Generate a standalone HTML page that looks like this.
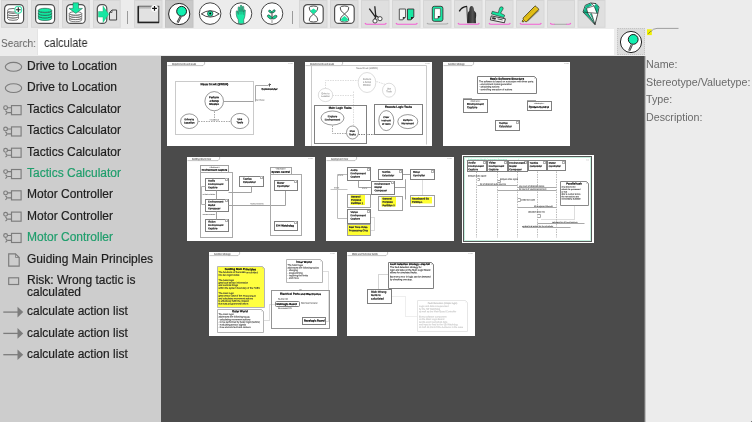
<!DOCTYPE html>
<html><head><meta charset="utf-8">
<style>
*{margin:0;padding:0;box-sizing:border-box}
html,body{width:752px;height:422px;overflow:hidden;background:#ececec;font-family:"Liberation Sans",sans-serif}
.row,.lbl,.th,.abs{will-change:transform}
.abs{position:absolute}
.btn{position:absolute;top:0;width:27px;height:28px;background:#dedede}
.btn svg{position:absolute;left:0;top:0}
.sep{position:absolute;top:11px;width:1px;height:13px;background:#a8a8a8}
#left{position:absolute;left:0;top:56px;width:161px;height:366px;background:#cdcdcd}
#dark{position:absolute;left:161px;top:56px;width:484px;height:366px;background:#4b4b4b}
#right{position:absolute;left:645px;top:28px;width:107px;height:394px;background:#ececec}
.row{position:absolute;left:27px;font-size:12px;color:#1e1e1e;white-space:nowrap;line-height:14px;-webkit-text-stroke:0.2px #1e1e1e}
.row.g{-webkit-text-stroke:0.2px #1f9e6c}
.row.g{color:#1f9e6c}
.ico{position:absolute;left:0}
.lbl{position:absolute;left:646px;font-size:10.7px;color:#6a6a6a;white-space:nowrap;line-height:12px}
.th{position:absolute;background:#fff}
.th svg text{text-rendering:geometricPrecision}
</style></head><body>
<!-- toolbar buttons -->
<svg class="abs" style="left:0;top:0" width="752" height="29" viewBox="0 0 752 29">
<defs>
<linearGradient id="gbar" x1="0" y1="0" x2="0" y2="1"><stop offset="0" stop-color="#aaa"/><stop offset="1" stop-color="#d0d0d0"/></linearGradient>
<linearGradient id="grim" x1="0" y1="0" x2="1" y2="0"><stop offset="0" stop-color="#222"/><stop offset="0.6" stop-color="#555"/><stop offset="1" stop-color="#222"/></linearGradient>
</defs>
<g fill="#dfdfdf" stroke="#d6d6d6" stroke-width="1">
<rect x="1.5" y="0.5" width="26" height="26.8"/>
<rect x="31.5" y="0.5" width="27" height="26.8"/>
<rect x="62.5" y="0.5" width="26.7" height="26.8"/>
<rect x="93.5" y="0.5" width="26.7" height="26.8"/>
<rect x="134.5" y="0.5" width="27.5" height="26.8"/>
<rect x="165.5" y="0.5" width="27.5" height="26.8" fill="#c8c8c8" stroke="#c2c2c2"/>
<rect x="299.5" y="0.5" width="27.5" height="26.8"/>
<rect x="330.5" y="0.5" width="27.5" height="26.8"/>
<rect x="361.5" y="0.5" width="27.5" height="26.8"/>
<rect x="392.5" y="0.5" width="27.5" height="26.8"/>
<rect x="423.5" y="0.5" width="27.5" height="26.8"/>
<rect x="454.5" y="0.5" width="27.5" height="26.8"/>
<rect x="485.5" y="0.5" width="27.5" height="26.8"/>
<rect x="516.5" y="0.5" width="27.5" height="26.8"/>
<rect x="547.5" y="0.5" width="27" height="26.8"/>
<rect x="578" y="0.5" width="27" height="26.8"/>
</g>
<!-- separators -->
<rect x="127" y="11" width="1" height="13" fill="#9a9a9a"/>
<rect x="292" y="11" width="1" height="13" fill="#9a9a9a"/>
<!-- rounded icon frames -->
<g fill="#fff" stroke="#505050" stroke-width="1.2">
<rect x="4.6" y="4.6" width="19" height="18.8" rx="4"/>
<rect x="35.6" y="4.6" width="19" height="18.8" rx="4"/>
<rect x="66.6" y="4.6" width="18.6" height="18.8" rx="4"/>
<rect x="97.3" y="4.6" width="9.5" height="18.8" rx="4"/>
<rect x="303.6" y="4.6" width="19.6" height="18.8" rx="4"/>
<rect x="334.6" y="4.6" width="19.6" height="18.8" rx="4"/>
</g>
<!-- icon1: db with plus -->
<g fill="#fff" stroke="#606060" stroke-width="0.9">
<path d="M7.5 18.5 a5.5 1.8 0 0 0 11 0 v-2.3 a5.5 1.8 0 0 1 -11 0z"/>
<path d="M7.5 16.2 a5.5 1.8 0 0 0 11 0 v-2.3 a5.5 1.8 0 0 1 -11 0z"/>
<path d="M7.5 13.9 a5.5 1.8 0 0 0 11 0 v-2.3 a5.5 1.8 0 0 1 -11 0z"/>
<ellipse cx="13" cy="10.3" rx="5.5" ry="1.8"/>
</g>
<circle cx="18.3" cy="9.7" r="3.4" fill="#fff" stroke="#3fe3b0" stroke-width="1.1"/>
<path d="M18.3 7.3v4.8M15.9 9.7h4.8" stroke="#222" stroke-width="1.1"/>
<!-- icon2: green db -->
<g fill="#12eca4" stroke="#1b4a3a" stroke-width="0.6">
<path d="M38.3 18.5 a6.7 2 0 0 0 13.4 0 v-2.6 a6.7 2 0 0 1 -13.4 0z"/>
<path d="M38.3 15.9 a6.7 2 0 0 0 13.4 0 v-2.6 a6.7 2 0 0 1 -13.4 0z"/>
<path d="M38.3 13.3 a6.7 2 0 0 0 13.4 0 v-2.6 a6.7 2 0 0 1 -13.4 0z"/>
<ellipse cx="45" cy="10.3" rx="6.7" ry="2"/>
</g>
<!-- icon3: db with arrow -->
<g fill="#fff" stroke="#707070" stroke-width="0.9">
<path d="M69.3 20 a6.2 1.7 0 0 0 12.4 0 v-2 a6.2 1.7 0 0 1 -12.4 0z"/>
<path d="M69.3 17.8 a6.2 1.7 0 0 0 12.4 0 v-2 a6.2 1.7 0 0 1 -12.4 0z"/>
<path d="M69.3 15.6 a6.2 1.7 0 0 0 12.4 0 v-2 a6.2 1.7 0 0 1 -12.4 0z"/>
<ellipse cx="75.5" cy="13.4" rx="6.2" ry="1.7"/>
</g>
<path d="M73 2.8 h5.5 v5.6 h4 l-6.7 5 l-6.8 -5 h4z" fill="#14eaa4" stroke="#1a5a44" stroke-width="0.5"/>
<!-- icon4: pill arrow doc -->
<path d="M98.5 11.5 h4.5 v-5.5 l5.7 8.3 l-5.7 8.3 v-5.5 h-4.5z" fill="#18e6a2" stroke="#1a6" stroke-width="0.4"/>
<path d="M109.5 12.5 l2.5 -2.5 h4.6 v10 h-7.1z" fill="#e3e3e3" stroke="#444" stroke-width="1"/>
<path d="M109.5 12.5 h2.5 v-2.5" fill="none" stroke="#444" stroke-width="0.8"/>
<!-- icon5: window plus -->
<rect x="138.3" y="6.3" width="20.5" height="16" fill="#e2e2e2" stroke="#333" stroke-width="1"/>
<rect x="138.8" y="6.5" width="19.5" height="2.5" fill="url(#gbar)"/>
<path d="M138.3 6.3 v16.2 h20.7" fill="none" stroke="#222" stroke-width="1.5"/>
<circle cx="154.5" cy="8.4" r="3.3" fill="#fff"/>
<path d="M154.5 6v4.8M152.1 8.4h4.8" stroke="#111" stroke-width="1.2"/>
<!-- icon6: pin circle (selected) -->
<circle cx="179.2" cy="14" r="10.6" fill="#fff" stroke="#222" stroke-width="1"/>
<path d="M180.7 16.5 L177.6 22.5" stroke="#333" stroke-width="2.2"/>
<path d="M180.7 16.5 L177.6 22.5" stroke="#aaa" stroke-width="0.8"/>
<circle cx="181.6" cy="11.3" r="4.9" fill="#12efb0" stroke="#1a1a1a" stroke-width="1"/>
<!-- icon7: eye -->
<circle cx="210.1" cy="13.6" r="10.8" fill="#fff" stroke="#444" stroke-width="1"/>
<path d="M201.3 13.9 Q210.2 7.5 219.2 13.9 Q210.2 20.3 201.3 13.9z" fill="#fff" stroke="#333" stroke-width="0.9"/>
<circle cx="210.2" cy="13.6" r="2.7" fill="#1de0a0" stroke="#153a2e" stroke-width="0.7"/>
<circle cx="210.2" cy="13.6" r="1" fill="#000"/>
<!-- icon8: hand -->
<circle cx="241" cy="13.6" r="10.8" fill="#fff" stroke="#444" stroke-width="1"/>
<path d="M238.6 23.6 L238.2 19.6 Q236.5 17.6 236.3 14.5 L236.2 11.2 Q236.8 10.2 237.6 11 L238.2 13.6 L238.1 7.4 Q238.7 6.2 239.6 7.2 L240 11.6 L240.3 5.6 Q241 4.6 241.8 5.6 L242 11.6 L242.4 6.6 Q243.1 5.7 243.8 6.7 L243.7 12.2 L244.1 10 Q244.8 9.2 245.4 10.2 L245 15.5 Q244.5 18.3 243.7 19.8 L243.9 23.6z" fill="#1de9a6" stroke="#203a32" stroke-width="0.45"/>
<path d="M240 11.6 L240.1 14.5 M242 11.6 L241.9 14.5 M243.7 12.2 L243.6 14.8 M238.2 13.6 L238.3 15" stroke="#1d5040" stroke-width="0.35" fill="none"/>
<!-- icon9: plant -->
<circle cx="272" cy="13.6" r="10.8" fill="#fff" stroke="#444" stroke-width="1"/>
<path d="M272 12.5 V23" stroke="#a0a0a0" stroke-width="1.1"/>
<path d="M272 12.8 V18.5" stroke="#333" stroke-width="0.6"/>
<g fill="#19d392" stroke="#0d2a20" stroke-width="0.5">
<ellipse cx="270.3" cy="11.6" rx="1.9" ry="1.1" transform="rotate(35 270.3 11.6)"/>
<ellipse cx="273.6" cy="11.3" rx="1.9" ry="1.1" transform="rotate(-40 273.6 11.3)"/>
<ellipse cx="269.6" cy="16.9" rx="2.6" ry="1.4" transform="rotate(38 269.6 16.9)"/>
<ellipse cx="274.7" cy="17.1" rx="2.6" ry="1.4" transform="rotate(-32 274.7 17.1)"/>
</g>
<!-- icon10/11 hourglass -->
<g fill="#fff" stroke="#3a3a3a" stroke-width="0.9">
<path d="M313.5 14 Q308.5 10.5 309.2 7.5 Q310 6 313.5 6 Q317 6 317.8 7.5 Q318.5 10.5 313.5 14 Q308.5 17.5 309.2 20.5 Q310 22 313.5 22 Q317 22 317.8 20.5 Q318.5 17.5 313.5 14z"/>
<path d="M344.5 14 Q339.5 10.5 340.2 7.5 Q341 6 344.5 6 Q348 6 348.8 7.5 Q349.5 10.5 344.5 14 Q339.5 17.5 340.2 20.5 Q341 22 344.5 22 Q348 22 348.8 20.5 Q349.5 17.5 344.5 14z"/>
</g>
<path d="M313.5 8.6 L316.9 11 L313.5 14 L310.1 11z" fill="#18e6a2"/>
<path d="M344.5 16 Q347.5 18 348.6 20.3 Q346.5 21.4 344.5 21.4 Q342.5 21.4 340.4 20.3 Q341.5 18 344.5 16z" fill="#18e6a2"/>
<!-- icon12 scissors -->
<path d="M369.3 8.6 L375.3 16.8 M374.8 6.2 L375.8 16.5 L374.8 19.2" stroke="#222" stroke-width="1.3" fill="none"/>
<path d="M375.5 15.5 L378.8 17.5" stroke="#222" stroke-width="1.1"/>
<circle cx="375" cy="21" r="2.1" fill="#fff" stroke="#333" stroke-width="0.9"/>
<circle cx="380" cy="18.7" r="2.1" fill="#fff" stroke="#333" stroke-width="0.9"/>
<!-- icon13 two docs -->
<path d="M399.3 9 h6.3 v8 l-2.8 2.8 h-3.5z" fill="#f4f4f4" stroke="#555" stroke-width="1"/>
<path d="M405.6 17 h-2.8 v2.8z" fill="#333"/>
<path d="M407.5 9 h6.3 v8 l-2.8 2.8 h-3.5z" fill="#18e6a2" stroke="#333" stroke-width="0.9"/>
<path d="M413.8 17 h-2.8 v2.8z" fill="#222"/>
<!-- icon14 green doc -->
<rect x="432.3" y="6.3" width="10.6" height="15" rx="2" fill="#18e6a2" stroke="#333" stroke-width="0.9"/>
<path d="M434.6 8.6 h5.8 v7.5 l-2.6 2.6 h-3.4z" fill="#fff" stroke="#222" stroke-width="0.5"/>
<path d="M440.4 16.1 h-2.6 v2.6z" fill="#222"/>
<!-- icon15 grim -->
<path d="M459.3 11.4 Q461.5 6.9 467 6.4" stroke="#1a1a1a" stroke-width="1.4" fill="none"/>
<path d="M466.8 6.4 L467.6 23.2" stroke="#222" stroke-width="0.9"/>
<path d="M467.8 23.3 L467.6 15 Q467.8 11.8 469.3 10.8 Q469.3 6.2 471.6 6 Q473.8 6.2 474 10.5 Q476.2 12 476.2 15.5 L475.8 19 L476 23.3z" fill="url(#grim)"/>
<!-- icon16 stamp -->
<path d="M501.2 6.8 Q503.4 6.6 503.2 8.8 L500.6 13.2 L504.6 15.2 L503.9 17.6 L491.4 13.9 L492.3 11.3 L498.2 12.9 L499.6 8.2 Q500 6.9 501.2 6.8z" fill="#14e6a0" stroke="#1a1a1a" stroke-width="0.55"/>
<path d="M491.3 15.9 L505.4 18.8 L504.4 22.8 L490.3 19.9z" fill="#efefef" stroke="#2a2a2a" stroke-width="0.9"/>
<path d="M492.6 17.6 L495.6 18.2 L495.3 19.3 L492.3 18.7z M497.6 18.9 L502.6 19.9" fill="#222" stroke="#333" stroke-width="0.8"/>
<!-- icon17 highlighter -->
<path d="M535.5 6.8 L539.5 10.8 L528 21.5 L525 19z" fill="#444" opacity="0.35"/>
<path d="M523.4 17.8 L534.6 6.4 Q535.3 5.7 536 6.4 L538.3 8.7 Q539 9.4 538.3 10.1 L526.9 21.4 Q526.2 22 525.4 21.5 L524.6 20.8 L523 22.1 L522.2 21.5 L522.6 20.3 L523.4 19.6 Q522.9 18.6 523.4 17.8z" fill="#e6c21a" stroke="#2a2300" stroke-width="0.75"/>
<path d="M525.5 18 L535 8.5 M527.2 19.6 L536.7 10.1" stroke="#b89800" stroke-width="0.5"/>
<!-- icon19 gem -->
<path d="M583 12 L585.3 5.3 L590.6 3 L596 3.6 L599 7 L597.6 14.3 L595 24.6z" fill="#fff" stroke="#1a1a1a" stroke-width="0.8" stroke-linejoin="round"/>
<path d="M583.4 12 L585.5 5.6 L586.5 8.3 L587.8 13.1 L595 24.3z" fill="#14b88c"/>
<path d="M585.6 5.4 L590.6 3.2 L592.2 5.3 L586.5 8.2z" fill="#14b88c"/>
<path d="M594.2 5.8 L596 3.8 L598.7 7.1 L597.4 13.6 L596.2 12.8z" fill="#14b88c"/>
<path d="M589.5 13.2 L591.3 13.4 L595 24.3z" fill="#14b88c"/>
<path d="M586.5 8.3 L593.9 5.9 L597.4 13.2 M583.2 12 L597.5 13.4 M586.5 8.3 L587.8 13.1 M593.9 5.9 L591.2 3.2 M587.8 13.1 L595 24.5 M591.5 13.3 L595 24.5" stroke="#1a1a1a" stroke-width="0.6" fill="none"/>
<!-- underlines -->
<g fill="none" stroke-width="1.1">
<path d="M365 23 Q365.5 24.3 367 24.3 H384.3 Q385.8 24.3 386.3 23" stroke="#f45fd3"/>
<path d="M396 23 Q396.5 24.3 398 24.3 H415.3 Q416.8 24.3 417.3 23" stroke="#f45fd3"/>
<path d="M427 23 Q427.5 24 429 24 H446 Q447.5 24 448 23" stroke="#aaa"/>
<path d="M458 23 Q458.5 24.3 460 24.3 H477.3 Q478.8 24.3 479.3 23" stroke="#f45fd3"/>
<path d="M489 23 Q489.5 24.3 491 24.3 H508.3 Q509.8 24.3 510.3 23" stroke="#f45fd3"/>
<path d="M520 23 Q520.5 24.3 522 24.3 H539.3 Q540.8 24.3 541.3 23" stroke="#f45fd3"/>
<path d="M554 24.3 H567" stroke="#aaa"/>
<path d="M550.3 23 Q550.8 24.3 552.3 24.3 H554.5 M566.5 24.3 H568.8 Q570.3 24.3 570.8 23" stroke="#f45fd3"/>
</g>
</svg>

<!-- search row -->
<div class="abs" style="left:0.5px;top:35.5px;font-size:11.6px;color:#5f5f5f;line-height:14px;transform:scaleX(0.875);transform-origin:0 0">Search:</div>
<div class="abs" style="left:37px;top:29px;width:577px;height:26px;background:#fff;border-left:1px solid #e4e4e4"></div>
<div class="abs" style="left:43.5px;top:36px;font-size:12px;color:#2a2a2a;line-height:14px;transform:scaleX(0.92);transform-origin:0 0">calculate</div>
<div class="abs" style="left:617px;top:28px;width:28px;height:27px;background:#dcdcdc;border:1px dotted #c4c4c4"></div>
<svg class="abs" style="left:610px;top:24px" width="80" height="34" viewBox="610 24 80 34">
<circle cx="631" cy="42" r="10.6" fill="#fff" stroke="#222" stroke-width="1"/>
<path d="M631.8 44.8 L629.2 50.6" stroke="#333" stroke-width="2.2"/>
<path d="M631.8 44.8 L629.2 50.6" stroke="#aaa" stroke-width="0.8"/>
<circle cx="633.2" cy="39.4" r="4.9" fill="#12efb0" stroke="#1a1a1a" stroke-width="1"/>
<rect x="647" y="29.3" width="4.8" height="5.8" fill="#f0f000"/>
<path d="M648.2 33.8 L650.8 31.2" stroke="#555" stroke-width="0.7"/>
<path d="M651 31.5 Q653 28.5 657 28.4 H678.5" fill="none" stroke="#8a8a8a" stroke-width="0.8"/>
</svg>

<div id="left"></div>
<div id="dark"></div>
<div class="abs" style="left:644px;top:56px;width:2px;height:366px;background:linear-gradient(90deg,#4b4b4b,#9a9a9a 50%,#e4e4e4)"></div>
<div class="abs" style="left:751px;top:421px;width:1px;height:1px;background:#777"></div>

<div class="lbl" style="top:58px">Name:</div>
<div class="lbl" style="top:76px">Stereotype/Valuetype:</div>
<div class="lbl" style="top:93px">Type:</div>
<div class="lbl" style="top:111px">Description:</div>

<!-- left list -->
<svg class="abs" style="left:0;top:0" width="30" height="422" viewBox="0 0 30 422">
<g fill="none" stroke="#7c7c7c" stroke-width="1.15">
<ellipse cx="13.5" cy="66.8" rx="8.2" ry="4.4"/>
<ellipse cx="13.5" cy="88.1" rx="8.2" ry="4.4"/>
<rect x="11.5" y="105.6" width="9.6" height="9.1"/>
<circle cx="5.6" cy="107.7" r="1.9"/>
<path d="M7.5 107.7H11.5M7.6 112.6H11.5M5.4 110.8Q8.6 112.6 5.4 114.5"/>
<rect x="11.5" y="126.9" width="9.6" height="9.1"/>
<circle cx="5.6" cy="129.0" r="1.9"/>
<path d="M7.5 129.0H11.5M7.6 133.9H11.5M5.4 132.1Q8.6 133.9 5.4 135.8"/>
<rect x="11.5" y="148.2" width="9.6" height="9.1"/>
<circle cx="5.6" cy="150.3" r="1.9"/>
<path d="M7.5 150.3H11.5M7.6 155.2H11.5M5.4 153.4Q8.6 155.2 5.4 157.1"/>
<rect x="11.5" y="169.5" width="9.6" height="9.1"/>
<circle cx="5.6" cy="171.6" r="1.9"/>
<path d="M7.5 171.6H11.5M7.6 176.5H11.5M5.4 174.7Q8.6 176.5 5.4 178.4"/>
<rect x="11.5" y="190.8" width="9.6" height="9.1"/>
<circle cx="5.6" cy="192.9" r="1.9"/>
<path d="M7.5 192.9H11.5M7.6 197.8H11.5M5.4 196.0Q8.6 197.8 5.4 199.7"/>
<rect x="11.5" y="212.1" width="9.6" height="9.1"/>
<circle cx="5.6" cy="214.2" r="1.9"/>
<path d="M7.5 214.2H11.5M7.6 219.1H11.5M5.4 217.3Q8.6 219.1 5.4 221.0"/>
<rect x="11.5" y="233.4" width="9.6" height="9.1"/>
<circle cx="5.6" cy="235.5" r="1.9"/>
<path d="M7.5 235.5H11.5M7.6 240.4H11.5M5.4 238.6Q8.6 240.4 5.4 242.3"/>
<path d="M8.7 253.8H15.5L19.2 257.5V266.1H8.7z"/>
<path d="M15.5 253.8V257.5H19.2" stroke-width="0.8"/>
<rect x="8.7" y="277.8" width="9.9" height="6.7"/>
</g>
<path d="M3.3 312.1H18" stroke="#7c7c7c" stroke-width="1.3"/>
<path d="M17.5 306.8L23.2 312.1L17.5 317.4z" fill="#7c7c7c"/>
<path d="M3.3 333.4H18" stroke="#7c7c7c" stroke-width="1.3"/>
<path d="M17.5 328.1L23.2 333.4L17.5 338.7z" fill="#7c7c7c"/>
<path d="M3.3 354.7H18" stroke="#7c7c7c" stroke-width="1.3"/>
<path d="M17.5 349.4L23.2 354.7L17.5 360.0z" fill="#7c7c7c"/>
</svg>
<div class="row" style="top:59px">Drive to Location</div>
<div class="row" style="top:80.4px">Drive to Location</div>
<div class="row" style="top:101.8px">Tactics Calculator</div>
<div class="row" style="top:123.2px">Tactics Calculator</div>
<div class="row" style="top:144.6px">Tactics Calculator</div>
<div class="row g" style="top:166px">Tactics Calculator</div>
<div class="row" style="top:187.4px">Motor Controller</div>
<div class="row" style="top:208.8px">Motor Controller</div>
<div class="row g" style="top:230.2px">Motor Controller</div>
<div class="row" style="top:251.6px">Guiding Main Principles</div>
<div class="row" style="top:274px;line-height:12.2px">Risk: Wrong tactic is<br>calculated</div>
<div class="row" style="top:304.2px">calculate action list</div>
<div class="row" style="top:325.5px">calculate action list</div>
<div class="row" style="top:346.8px">calculate action list</div>

<!-- thumbnails -->
<div class="th" style="left:166.6px;top:62px;width:127.1px;height:83.8px"><svg width="128" height="84" viewBox="0 0 128 84" font-family="Liberation Sans" style="position:absolute;left:0;top:0"><path d="M0.5 3.6H36L37.6 2V0" fill="none" stroke="#888" stroke-width="0.5"/><text x="5" y="2.75" font-size="2.2" stroke="#666" stroke-width="0.1" text-anchor="start" fill="#666" transform="rotate(0.05)">Requirements and Goals</text><text x="126" y="1.8" font-size="1.3" stroke="#bbb" stroke-width="0.1" text-anchor="end" fill="#bbb" transform="rotate(0.05)">1 / 1 of 1</text><rect x="8.5" y="19.5" width="78.0" height="53.0" fill="none" stroke="#cacaca" stroke-width="1" /><text x="47.5" y="23.3" font-size="2.99" font-weight="bold" stroke="#111" stroke-width="0.2" text-anchor="middle" fill="#111" transform="rotate(0.05)">Neue Dr.wk (3WDR)</text><path d="M 47.5 49.5 V 59.5" fill="none" stroke="#aaaaaa" stroke-width="1" stroke-dasharray="1.5 1"/><path d="M 31.5 59.5 H 63.5" fill="none" stroke="#aaaaaa" stroke-width="1" stroke-dasharray="1.5 1"/><text x="47.5" y="58.3" font-size="1.4" stroke="#888" stroke-width="0.1" text-anchor="middle" fill="#888" transform="rotate(0.05)">include include</text><ellipse cx="47.2" cy="39.2" rx="9.3" ry="9.6" fill="#fff" stroke="#333" stroke-width="0.5"/><text x="47.2" y="36.3" font-size="2.64" font-weight="bold" stroke="#222" stroke-width="0.2" text-anchor="middle" fill="#222" transform="rotate(0.05)">Perform</text><text x="47.2" y="39.599999999999994" font-size="2.64" font-weight="bold" stroke="#222" stroke-width="0.2" text-anchor="middle" fill="#222" transform="rotate(0.05)">a Setup</text><text x="47.2" y="42.9" font-size="2.64" font-weight="bold" stroke="#222" stroke-width="0.2" text-anchor="middle" fill="#222" transform="rotate(0.05)">Mission</text><ellipse cx="22.3" cy="59.2" rx="8.7" ry="7.3" fill="#fff" stroke="#333" stroke-width="0.5"/><text x="22.3" y="58.2" font-size="2.53" font-weight="bold" stroke="#222" stroke-width="0.2" text-anchor="middle" fill="#222" transform="rotate(0.05)">Drive to</text><text x="22.3" y="61.5" font-size="2.53" font-weight="bold" stroke="#222" stroke-width="0.2" text-anchor="middle" fill="#222" transform="rotate(0.05)">Location</text><ellipse cx="72.9" cy="59.0" rx="9.0" ry="7.6" fill="#fff" stroke="#333" stroke-width="0.5"/><text x="72.9" y="58.0" font-size="2.53" font-weight="bold" stroke="#222" stroke-width="0.2" text-anchor="middle" fill="#222" transform="rotate(0.05)">Use</text><text x="72.9" y="61.3" font-size="2.53" font-weight="bold" stroke="#222" stroke-width="0.2" text-anchor="middle" fill="#222" transform="rotate(0.05)">Tools</text><path d="M 56.5 39.5 H 86.5" fill="none" stroke="#a2a2a2" stroke-width="1"/><path d="M 88.5 39.5 V 23.5 H 101.5" fill="none" stroke="#aaaaaa" stroke-width="1"/><path d="M 102.5 21.5 V 24.5 M 101.5 22.5 h 2.5" fill="none" stroke="#595959" stroke-width="1"/><text x="102.5" y="27.8" font-size="2.76" font-weight="bold" stroke="#111" stroke-width="0.2" text-anchor="middle" fill="#111" transform="rotate(0.05)">Commander</text><text x="88.5" y="38.3" font-size="1.6" stroke="#888" stroke-width="0.1" text-anchor="start" fill="#888" transform="rotate(0.05)">Start Mission</text></svg></div>
<div class="th" style="left:305px;top:62px;width:127.1px;height:83.8px"><svg width="127" height="84" viewBox="0 0 127 84" font-family="Liberation Sans" style="position:absolute;left:0;top:0"><path d="M0.5 3.6H36L37.6 2V0" fill="none" stroke="#888" stroke-width="0.5"/><text x="5" y="2.75" font-size="2.2" stroke="#666" stroke-width="0.1" text-anchor="start" fill="#666" transform="rotate(0.05)">Requirements and Goals</text><text x="125" y="1.8" font-size="1.3" stroke="#bbb" stroke-width="0.1" text-anchor="end" fill="#bbb" transform="rotate(0.05)">1 / 1 of 1</text><path d="M 6.5 84.5 V 3.5 H 121.5 V 82.5" fill="none" stroke="#cacaca" stroke-width="1"/><text x="62" y="7" font-size="2.4" stroke="#999" stroke-width="0.1" text-anchor="middle" fill="#999" transform="rotate(0.05)">Neue Dr.wk (3WDR)</text><ellipse cx="20.5" cy="33" rx="7.2" ry="6.6" fill="#fff" stroke="#aaa" stroke-width="0.4"/><text x="20.5" y="32.3" font-size="2.3" stroke="#999" stroke-width="0.1" text-anchor="middle" fill="#999" transform="rotate(0.05)">Drive to</text><text x="20.5" y="35.099999999999994" font-size="2.3" stroke="#999" stroke-width="0.1" text-anchor="middle" fill="#999" transform="rotate(0.05)">Location</text><ellipse cx="62" cy="20.5" rx="8.8" ry="10" fill="#fff" stroke="#aaa" stroke-width="0.4"/><text x="62" y="18.0" font-size="2.3" stroke="#999" stroke-width="0.1" text-anchor="middle" fill="#999" transform="rotate(0.05)">Perform</text><text x="62" y="20.8" font-size="2.3" stroke="#999" stroke-width="0.1" text-anchor="middle" fill="#999" transform="rotate(0.05)">a Setup</text><text x="62" y="23.6" font-size="2.3" stroke="#999" stroke-width="0.1" text-anchor="middle" fill="#999" transform="rotate(0.05)">Mission</text><ellipse cx="84" cy="28.2" rx="6.5" ry="7" fill="#fff" stroke="#aaa" stroke-width="0.4"/><text x="84" y="27.5" font-size="2.3" stroke="#999" stroke-width="0.1" text-anchor="middle" fill="#999" transform="rotate(0.05)">Use</text><text x="84" y="30.3" font-size="2.3" stroke="#999" stroke-width="0.1" text-anchor="middle" fill="#999" transform="rotate(0.05)">Tools</text><path d="M 20.5 26.5 V 18.5 H 53.5" fill="none" stroke="#dddddd" stroke-width="1" stroke-dasharray="1.5 1"/><path d="M 27.5 33.5 H 48.5 M 48.5 29.5 V 64.5" fill="none" stroke="#dddddd" stroke-width="1" stroke-dasharray="1.5 1"/><path d="M 71.5 19.5 L 80.5 22.5" fill="none" stroke="#dddddd" stroke-width="1" stroke-dasharray="1.5 1"/><rect x="9.5" y="43.5" width="52.0" height="38.0" fill="none" stroke="#808080" stroke-width="1" /><text x="35.2" y="46.7" font-size="2.76" font-weight="bold" stroke="#111" stroke-width="0.2" text-anchor="middle" fill="#111" transform="rotate(0.05)">Main Logic Tasks</text><ellipse cx="27.5" cy="56" rx="11.5" ry="7" fill="#fff" stroke="#333" stroke-width="0.5"/><text x="27.5" y="55.3" font-size="2.53" font-weight="bold" stroke="#333" stroke-width="0.2" text-anchor="middle" fill="#333" transform="rotate(0.05)">Explore</text><text x="27.5" y="58.4" font-size="2.53" font-weight="bold" stroke="#333" stroke-width="0.2" text-anchor="middle" fill="#333" transform="rotate(0.05)">Environment</text><ellipse cx="47.5" cy="70.5" rx="6" ry="6.5" fill="#fff" stroke="#333" stroke-width="0.5"/><text x="47.5" y="70.0" font-size="2.53" font-weight="bold" stroke="#333" stroke-width="0.2" text-anchor="middle" fill="#333" transform="rotate(0.05)">Plan</text><text x="47.5" y="73.1" font-size="2.53" font-weight="bold" stroke="#333" stroke-width="0.2" text-anchor="middle" fill="#333" transform="rotate(0.05)">Tasks</text><path d="M 27.5 63.5 V 71.5 H 41.5" fill="none" stroke="#aaaaaa" stroke-width="1" stroke-dasharray="1.5 1"/><path d="M 53.5 72.5 H 117.5" fill="none" stroke="#808080" stroke-width="1" stroke-dasharray="1.5 1"/><rect x="69.5" y="42.5" width="48.0" height="30.0" fill="none" stroke="#808080" stroke-width="1" /><text x="93.5" y="45.7" font-size="2.76" font-weight="bold" stroke="#111" stroke-width="0.2" text-anchor="middle" fill="#111" transform="rotate(0.05)">Execute Logic Tasks</text><ellipse cx="81.3" cy="58.6" rx="7.5" ry="10" fill="#fff" stroke="#333" stroke-width="0.5"/><text x="81.3" y="56.0" font-size="2.42" font-weight="bold" stroke="#333" stroke-width="0.2" text-anchor="middle" fill="#333" transform="rotate(0.05)">Clear</text><text x="81.3" y="59.3" font-size="2.42" font-weight="bold" stroke="#333" stroke-width="0.2" text-anchor="middle" fill="#333" transform="rotate(0.05)">instructi</text><text x="81.3" y="62.6" font-size="2.42" font-weight="bold" stroke="#333" stroke-width="0.2" text-anchor="middle" fill="#333" transform="rotate(0.05)">of tools</text><ellipse cx="102.8" cy="59.6" rx="10" ry="7" fill="#fff" stroke="#333" stroke-width="0.5"/><text x="102.8" y="59.0" font-size="2.53" font-weight="bold" stroke="#333" stroke-width="0.2" text-anchor="middle" fill="#333" transform="rotate(0.05)">Perform</text><text x="102.8" y="62.1" font-size="2.53" font-weight="bold" stroke="#333" stroke-width="0.2" text-anchor="middle" fill="#333" transform="rotate(0.05)">Movement</text></svg></div>
<div class="th" style="left:443.2px;top:62px;width:127.4px;height:83.7px"><svg width="128" height="84" viewBox="0 0 128 84" font-family="Liberation Sans" style="position:absolute;left:0;top:0"><path d="M0.5 3.6H29L30.6 2V0" fill="none" stroke="#888" stroke-width="0.5"/><text x="5" y="2.75" font-size="2.2" stroke="#666" stroke-width="0.1" text-anchor="start" fill="#666" transform="rotate(0.05)">Solution Strategy</text><text x="126" y="1.8" font-size="1.3" stroke="#bbb" stroke-width="0.1" text-anchor="end" fill="#bbb" transform="rotate(0.05)">1 / 1 of 1</text><path d="M34.5 14.5H91.5L93.5 16.5V31.5H34.5z" fill="#fff" stroke="#808080" stroke-width="1"/><path d="M91.5 14.5V16.5H93.5" fill="none" stroke="#808080" stroke-width="0.3"/><text x="64" y="17.6" font-size="2.88" font-weight="bold" stroke="#111" stroke-width="0.2" text-anchor="middle" fill="#111" transform="rotate(0.05)">Basic Software Structure</text><text x="36" y="20.3" font-size="2.35" stroke="#444" stroke-width="0.1" text-anchor="start" fill="#444" transform="rotate(0.05)">The software is based on a structure with three parts:</text><text x="36" y="22.900000000000002" font-size="2.35" stroke="#444" stroke-width="0.1" text-anchor="start" fill="#444" transform="rotate(0.05)">- environment model generation</text><text x="36" y="25.5" font-size="2.35" stroke="#444" stroke-width="0.1" text-anchor="start" fill="#444" transform="rotate(0.05)">- calculating actions</text><text x="36" y="28.1" font-size="2.35" stroke="#444" stroke-width="0.1" text-anchor="start" fill="#444" transform="rotate(0.05)">- controlling execution of actions</text><rect x="20.5" y="36.5" width="8.0" height="1.0" fill="#fff" stroke="#aaaaaa" stroke-width="1" /><rect x="20.5" y="37.5" width="24.0" height="13.0" fill="#fff" stroke="#808080" stroke-width="1" /><text x="32.2" y="39.5" font-size="1.5" stroke="#555" stroke-width="0.1" text-anchor="middle" fill="#555" transform="rotate(0.05)">&lt;&lt;block topic&gt;&gt;</text><text x="24" y="43.0" font-size="2.76" font-weight="bold" stroke="#333" stroke-width="0.2" text-anchor="start" fill="#333" transform="rotate(0.05)">Environment</text><text x="24" y="46.3" font-size="2.76" font-weight="bold" stroke="#333" stroke-width="0.2" text-anchor="start" fill="#333" transform="rotate(0.05)">Capture</text><rect x="84.5" y="38.5" width="8.0" height="1.0" fill="#fff" stroke="#aaaaaa" stroke-width="1" /><rect x="84.5" y="39.5" width="24.0" height="9.0" fill="#fff" stroke="#808080" stroke-width="1" /><text x="96" y="42" font-size="1.5" stroke="#555" stroke-width="0.1" text-anchor="middle" fill="#555" transform="rotate(0.05)">&lt;&lt;block topic&gt;&gt;</text><text x="96" y="45.8" font-size="2.76" font-weight="bold" stroke="#111" stroke-width="0.2" text-anchor="middle" fill="#111" transform="rotate(0.05)">System Control</text><rect x="52.5" y="58.5" width="24.0" height="10.0" fill="#fff" stroke="#808080" stroke-width="1" /><rect x="73.5" y="59.5" width="2.0" height="2.0" fill="#fff" stroke="#b2b2b2" stroke-width="1" /><text x="56" y="62.0" font-size="2.64" font-weight="bold" stroke="#333" stroke-width="0.2" text-anchor="start" fill="#333" transform="rotate(0.05)">Tactics</text><text x="56" y="65.3" font-size="2.64" font-weight="bold" stroke="#333" stroke-width="0.2" text-anchor="start" fill="#333" transform="rotate(0.05)">Calculator</text></svg></div>
<div class="th" style="left:187.1px;top:156.6px;width:128.1px;height:84.3px"><svg width="128" height="85" viewBox="0 0 128 85" font-family="Liberation Sans" style="position:absolute;left:0;top:0"><path d="M0.5 3.6H31L32.6 2V0" fill="none" stroke="#888" stroke-width="0.5"/><text x="5" y="2.75" font-size="2.2" stroke="#666" stroke-width="0.1" text-anchor="start" fill="#666" transform="rotate(0.05)">Building Block View</text><text x="126" y="1.8" font-size="1.3" stroke="#bbb" stroke-width="0.1" text-anchor="end" fill="#bbb" transform="rotate(0.05)">1 / 1 of 1</text><rect x="13.5" y="8.5" width="28.0" height="7.0" fill="#fff" stroke="#a2a2a2" stroke-width="1" /><text x="27.5" y="10.8" font-size="1.5" stroke="#555" stroke-width="0.1" text-anchor="middle" fill="#555" transform="rotate(0.05)">&lt;&lt;block topic&gt;&gt;</text><text x="27.5" y="13.8" font-size="2.53" font-weight="bold" stroke="#111" stroke-width="0.2" text-anchor="middle" fill="#111" transform="rotate(0.05)">Environment Capture</text><rect x="13.5" y="15.5" width="32.0" height="65.0" fill="none" stroke="#aaaaaa" stroke-width="1" /><rect x="18.5" y="21.5" width="23.0" height="12.0" fill="#fff" stroke="#808080" stroke-width="1" /><rect x="38.5" y="21.5" width="2.0" height="2.0" fill="#fff" stroke="#b2b2b2" stroke-width="1" /><text x="21" y="24.6" font-size="2.53" font-weight="bold" stroke="#333" stroke-width="0.2" text-anchor="start" fill="#333" transform="rotate(0.05)">Audio</text><text x="21" y="27.900000000000002" font-size="2.53" font-weight="bold" stroke="#333" stroke-width="0.2" text-anchor="start" fill="#333" transform="rotate(0.05)">Environment</text><text x="21" y="31.200000000000003" font-size="2.53" font-weight="bold" stroke="#333" stroke-width="0.2" text-anchor="start" fill="#333" transform="rotate(0.05)">Capture</text><rect x="18.5" y="42.5" width="23.0" height="12.0" fill="#fff" stroke="#808080" stroke-width="1" /><rect x="38.5" y="42.5" width="2.0" height="2.0" fill="#fff" stroke="#b2b2b2" stroke-width="1" /><text x="21" y="45.6" font-size="2.53" font-weight="bold" stroke="#333" stroke-width="0.2" text-anchor="start" fill="#333" transform="rotate(0.05)">Environment</text><text x="21" y="48.9" font-size="2.53" font-weight="bold" stroke="#333" stroke-width="0.2" text-anchor="start" fill="#333" transform="rotate(0.05)">Model</text><text x="21" y="52.2" font-size="2.53" font-weight="bold" stroke="#333" stroke-width="0.2" text-anchor="start" fill="#333" transform="rotate(0.05)">Composer</text><rect x="18.5" y="62.5" width="23.0" height="12.0" fill="#fff" stroke="#808080" stroke-width="1" /><rect x="38.5" y="62.5" width="2.0" height="2.0" fill="#fff" stroke="#b2b2b2" stroke-width="1" /><text x="21" y="65.6" font-size="2.53" font-weight="bold" stroke="#333" stroke-width="0.2" text-anchor="start" fill="#333" transform="rotate(0.05)">Vision</text><text x="21" y="68.89999999999999" font-size="2.53" font-weight="bold" stroke="#333" stroke-width="0.2" text-anchor="start" fill="#333" transform="rotate(0.05)">Environment</text><text x="21" y="72.19999999999999" font-size="2.53" font-weight="bold" stroke="#333" stroke-width="0.2" text-anchor="start" fill="#333" transform="rotate(0.05)">Capture</text><path d="M 29.5 33.5 V 42.5 M 29.5 54.5 V 62.5" fill="none" stroke="#a2a2a2" stroke-width="1"/><path d="M 18.5 29.5 H 14.5 V 47.5 H 18.5 M 18.5 47.5" fill="none" stroke="#b2b2b2" stroke-width="1"/><text x="22" y="37.8" font-size="1.3" stroke="#777" stroke-width="0.1" text-anchor="middle" fill="#777" transform="rotate(0.05)">ext fused ex.interface</text><text x="22" y="58" font-size="1.3" stroke="#777" stroke-width="0.1" text-anchor="middle" fill="#777" transform="rotate(0.05)">ext fused ex.interface</text><rect x="52.5" y="19.5" width="24.0" height="10.0" fill="#fff" stroke="#808080" stroke-width="1" /><rect x="73.5" y="19.5" width="2.0" height="2.0" fill="#fff" stroke="#b2b2b2" stroke-width="1" /><text x="56" y="22.6" font-size="2.64" font-weight="bold" stroke="#333" stroke-width="0.2" text-anchor="start" fill="#333" transform="rotate(0.05)">Tactics</text><text x="56" y="25.900000000000002" font-size="2.64" font-weight="bold" stroke="#333" stroke-width="0.2" text-anchor="start" fill="#333" transform="rotate(0.05)">Calculator</text><path d="M 64.5 29.5 V 35.5 H 41.5" fill="none" stroke="#a2a2a2" stroke-width="1"/><path d="M 41.5 48.5 H 98.5 V 33.5" fill="none" stroke="#a2a2a2" stroke-width="1"/><text x="70" y="47.2" font-size="1.5" stroke="#777" stroke-width="0.1" text-anchor="middle" fill="#777" transform="rotate(0.05)">MoveCommandInfo</text><rect x="83.5" y="10.5" width="21.0" height="7.0" fill="#fff" stroke="#a2a2a2" stroke-width="1" /><text x="93.7" y="12.2" font-size="1.5" stroke="#555" stroke-width="0.1" text-anchor="middle" fill="#555" transform="rotate(0.05)">&lt;&lt;block topic&gt;&gt;</text><text x="93.7" y="15.6" font-size="2.53" font-weight="bold" stroke="#111" stroke-width="0.2" text-anchor="middle" fill="#111" transform="rotate(0.05)">System Control</text><rect x="83.5" y="17.5" width="31.0" height="61.0" fill="none" stroke="#aaaaaa" stroke-width="1" /><rect x="87.5" y="23.5" width="23.0" height="10.0" fill="#fff" stroke="#808080" stroke-width="1" /><rect x="107.5" y="23.5" width="2.0" height="2.0" fill="#fff" stroke="#b2b2b2" stroke-width="1" /><text x="90" y="26.6" font-size="2.64" font-weight="bold" stroke="#333" stroke-width="0.2" text-anchor="start" fill="#333" transform="rotate(0.05)">Motor</text><text x="90" y="29.900000000000002" font-size="2.64" font-weight="bold" stroke="#333" stroke-width="0.2" text-anchor="start" fill="#333" transform="rotate(0.05)">Controller</text><rect x="87.5" y="64.5" width="23.0" height="9.0" fill="#fff" stroke="#808080" stroke-width="1" /><rect x="107.5" y="64.5" width="2.0" height="2.0" fill="#fff" stroke="#b2b2b2" stroke-width="1" /><text x="89" y="69.5" font-size="2.64" font-weight="bold" stroke="#111" stroke-width="0.2" text-anchor="start" fill="#111" transform="rotate(0.05)">E-H Watchdog</text></svg></div>
<div class="th" style="left:325.6px;top:156.6px;width:127.5px;height:84.3px"><svg width="128" height="85" viewBox="0 0 128 85" font-family="Liberation Sans" style="position:absolute;left:0;top:0"><path d="M0.5 3.6H29L30.6 2V0" fill="none" stroke="#888" stroke-width="0.5"/><text x="5" y="2.75" font-size="2.2" stroke="#666" stroke-width="0.1" text-anchor="start" fill="#666" transform="rotate(0.05)">Deployment View</text><text x="126" y="1.8" font-size="1.3" stroke="#bbb" stroke-width="0.1" text-anchor="end" fill="#bbb" transform="rotate(0.05)">1 / 1 of 1</text><path d="M 21.5 17.5 H 11.5 V 61.5 H 21.5" fill="none" stroke="#bbbbbb" stroke-width="1"/><path d="M 4.5 32.5 H 21.5" fill="none" stroke="#c4c4c4" stroke-width="1"/><text x="8" y="31.2" font-size="1.4" stroke="#888" stroke-width="0.1" text-anchor="start" fill="#888" transform="rotate(0.05)">ethernet</text><path d="M 32.5 23.5 V 30.5 H 45.5 M 68.5 30.5 H 79.5 V 22.5 M 79.5 22.5 V 42.5" fill="none" stroke="#a2a2a2" stroke-width="1"/><path d="M 76.5 17.5 H 84.5" fill="none" stroke="#a2a2a2" stroke-width="1"/><path d="M 96.5 22.5 V 38.5" fill="none" stroke="#bbbbbb" stroke-width="1" stroke-dasharray="1 1"/><path d="M 44.5 60.5 H 48.5 V 73.5 H 44.5" fill="none" stroke="#bbbbbb" stroke-width="1" stroke-dasharray="1 1"/><text x="36" y="31.5" font-size="1.4" stroke="#888" stroke-width="0.1" text-anchor="start" fill="#888" transform="rotate(0.05)">ethernet</text><text x="12" y="18.5" font-size="1.4" stroke="#888" stroke-width="0.1" text-anchor="start" fill="#888" transform="rotate(0.05)">ethernet</text><rect x="21.5" y="10.5" width="23.0" height="13.0" fill="#fff" stroke="#808080" stroke-width="1" /><rect x="41.5" y="11.5" width="2.0" height="2.0" fill="#fff" stroke="#b2b2b2" stroke-width="1" /><text x="24.5" y="14.0" font-size="2.53" font-weight="bold" stroke="#333" stroke-width="0.2" text-anchor="start" fill="#333" transform="rotate(0.05)">Audio</text><text x="24.5" y="17.3" font-size="2.53" font-weight="bold" stroke="#333" stroke-width="0.2" text-anchor="start" fill="#333" transform="rotate(0.05)">Environment</text><text x="24.5" y="20.6" font-size="2.53" font-weight="bold" stroke="#333" stroke-width="0.2" text-anchor="start" fill="#333" transform="rotate(0.05)">Capture</text><rect x="52.5" y="12.5" width="24.0" height="10.0" fill="#fff" stroke="#808080" stroke-width="1" /><rect x="73.5" y="13.5" width="2.0" height="2.0" fill="#fff" stroke="#b2b2b2" stroke-width="1" /><text x="56" y="15.8" font-size="2.53" font-weight="bold" stroke="#333" stroke-width="0.2" text-anchor="start" fill="#333" transform="rotate(0.05)">Tactics</text><text x="56" y="19.1" font-size="2.53" font-weight="bold" stroke="#333" stroke-width="0.2" text-anchor="start" fill="#333" transform="rotate(0.05)">Calculator</text><rect x="84.5" y="12.5" width="24.0" height="10.0" fill="#fff" stroke="#808080" stroke-width="1" /><rect x="105.5" y="13.5" width="2.0" height="2.0" fill="#fff" stroke="#b2b2b2" stroke-width="1" /><text x="87" y="15.8" font-size="2.53" font-weight="bold" stroke="#333" stroke-width="0.2" text-anchor="start" fill="#333" transform="rotate(0.05)">Motor</text><text x="87" y="19.1" font-size="2.53" font-weight="bold" stroke="#333" stroke-width="0.2" text-anchor="start" fill="#333" transform="rotate(0.05)">Controller</text><rect x="45.5" y="24.5" width="23.0" height="13.0" fill="#fff" stroke="#808080" stroke-width="1" /><rect x="65.5" y="24.5" width="2.0" height="2.0" fill="#fff" stroke="#b2b2b2" stroke-width="1" /><text x="48.5" y="27.6" font-size="2.53" font-weight="bold" stroke="#333" stroke-width="0.2" text-anchor="start" fill="#333" transform="rotate(0.05)">Environment</text><text x="48.5" y="30.900000000000002" font-size="2.53" font-weight="bold" stroke="#333" stroke-width="0.2" text-anchor="start" fill="#333" transform="rotate(0.05)">Model</text><text x="48.5" y="34.2" font-size="2.53" font-weight="bold" stroke="#333" stroke-width="0.2" text-anchor="start" fill="#333" transform="rotate(0.05)">Composer</text><rect x="21.5" y="37.5" width="23.0" height="13.0" fill="#fff" stroke="#9f9f9f" stroke-width="1" /><rect x="24.5" y="38" width="14.5" height="10" fill="#ffff30" stroke="none" stroke-width="0" /><text x="25" y="40.5" font-size="2.53" font-weight="bold" stroke="#333" stroke-width="0.2" text-anchor="start" fill="#333" transform="rotate(0.05)">General</text><text x="25" y="43.8" font-size="2.53" font-weight="bold" stroke="#333" stroke-width="0.2" text-anchor="start" fill="#333" transform="rotate(0.05)">Purpose</text><text x="25" y="47.1" font-size="2.53" font-weight="bold" stroke="#333" stroke-width="0.2" text-anchor="start" fill="#333" transform="rotate(0.05)">Partition 1</text><rect x="52.5" y="39.5" width="24.0" height="14.0" fill="#fff" stroke="#9f9f9f" stroke-width="1" /><rect x="55.5" y="40" width="14.5" height="9.5" fill="#ffff30" stroke="none" stroke-width="0" /><text x="56.5" y="42.5" font-size="2.53" font-weight="bold" stroke="#333" stroke-width="0.2" text-anchor="start" fill="#333" transform="rotate(0.05)">General</text><text x="56.5" y="45.8" font-size="2.53" font-weight="bold" stroke="#333" stroke-width="0.2" text-anchor="start" fill="#333" transform="rotate(0.05)">Purpose</text><text x="56.5" y="49.1" font-size="2.53" font-weight="bold" stroke="#333" stroke-width="0.2" text-anchor="start" fill="#333" transform="rotate(0.05)">Partition 2</text><rect x="84.5" y="38.5" width="24.0" height="11.0" fill="#fff" stroke="#9f9f9f" stroke-width="1" /><rect x="85" y="40" width="21" height="6.5" fill="#ffff30" stroke="none" stroke-width="0" /><text x="86" y="42.5" font-size="2.53" font-weight="bold" stroke="#333" stroke-width="0.2" text-anchor="start" fill="#333" transform="rotate(0.05)">Baseboard I/O</text><text x="86" y="45.8" font-size="2.53" font-weight="bold" stroke="#333" stroke-width="0.2" text-anchor="start" fill="#333" transform="rotate(0.05)">Partition</text><rect x="21.5" y="52.5" width="23.0" height="14.0" fill="#fff" stroke="#808080" stroke-width="1" /><rect x="41.5" y="53.5" width="2.0" height="2.0" fill="#fff" stroke="#b2b2b2" stroke-width="1" /><text x="24.5" y="56.0" font-size="2.53" font-weight="bold" stroke="#333" stroke-width="0.2" text-anchor="start" fill="#333" transform="rotate(0.05)">Vision</text><text x="24.5" y="59.3" font-size="2.53" font-weight="bold" stroke="#333" stroke-width="0.2" text-anchor="start" fill="#333" transform="rotate(0.05)">Environment</text><text x="24.5" y="62.6" font-size="2.53" font-weight="bold" stroke="#333" stroke-width="0.2" text-anchor="start" fill="#333" transform="rotate(0.05)">Capture</text><rect x="21.5" y="67.5" width="23.0" height="11.0" fill="#ffff30" stroke="#9f9f9f" stroke-width="1" /><text x="23" y="71.0" font-size="2.42" font-weight="bold" stroke="#333" stroke-width="0.2" text-anchor="start" fill="#333" transform="rotate(0.05)">Real Time Video</text><text x="23" y="74.3" font-size="2.42" font-weight="bold" stroke="#333" stroke-width="0.2" text-anchor="start" fill="#333" transform="rotate(0.05)">Processing Chip</text></svg></div>
<div class="th" style="left:462px;top:155px;width:132px;height:88px"><svg width="132" height="88" viewBox="0 0 132 88" font-family="Liberation Sans" style="position:absolute;left:0;top:0"><rect x="0" y="0" width="132" height="88" fill="#fff"/><rect x="1.5" y="1.5" width="128" height="85" fill="none" stroke="#585858" stroke-width="1"/><rect x="2.5" y="2.5" width="126" height="83" fill="none" stroke="#c4f0de" stroke-width="1"/><path d="M4 5.3H56L57 4V3.5" fill="none" stroke="#9fe6c8" stroke-width="0.5"/><text x="6" y="5.2" font-size="2.1" stroke="#8adcbc" stroke-width="0.1" text-anchor="start" fill="#8adcbc" transform="rotate(0.05)">Environment Model Component Sequence</text><text x="127" y="5.5" font-size="1.3" stroke="#bbb" stroke-width="0.1" text-anchor="end" fill="#bbb" transform="rotate(0.05)">1 / 1</text><path d="M 14.5 16.5 V 82.5" fill="none" stroke="#bcbcbc" stroke-width="1" stroke-dasharray="1.5 1"/><rect x="5.5" y="5.5" width="19.0" height="11.0" fill="#fff" stroke="#808080" stroke-width="1" /><rect x="21.5" y="6.5" width="2.0" height="2.0" fill="#fff" stroke="#b2b2b2" stroke-width="1" /><text x="6.3" y="8.6" font-size="2.53" font-weight="bold" stroke="#333" stroke-width="0.2" text-anchor="start" fill="#333" transform="rotate(0.05)">Audio</text><text x="6.3" y="11.899999999999999" font-size="2.53" font-weight="bold" stroke="#333" stroke-width="0.2" text-anchor="start" fill="#333" transform="rotate(0.05)">Environment</text><text x="6.3" y="15.2" font-size="2.53" font-weight="bold" stroke="#333" stroke-width="0.2" text-anchor="start" fill="#333" transform="rotate(0.05)">Capture</text><path d="M 35.5 16.5 V 82.5" fill="none" stroke="#bcbcbc" stroke-width="1" stroke-dasharray="1.5 1"/><rect x="25.5" y="5.5" width="20.0" height="11.0" fill="#fff" stroke="#808080" stroke-width="1" /><rect x="42.5" y="6.5" width="2.0" height="2.0" fill="#fff" stroke="#b2b2b2" stroke-width="1" /><text x="26.8" y="8.6" font-size="2.53" font-weight="bold" stroke="#333" stroke-width="0.2" text-anchor="start" fill="#333" transform="rotate(0.05)">Video</text><text x="26.8" y="11.899999999999999" font-size="2.53" font-weight="bold" stroke="#333" stroke-width="0.2" text-anchor="start" fill="#333" transform="rotate(0.05)">Environment</text><text x="26.8" y="15.2" font-size="2.53" font-weight="bold" stroke="#333" stroke-width="0.2" text-anchor="start" fill="#333" transform="rotate(0.05)">Capture</text><path d="M 55.5 16.5 V 82.5" fill="none" stroke="#bcbcbc" stroke-width="1" stroke-dasharray="1.5 1"/><rect x="46.5" y="5.5" width="19.0" height="11.0" fill="#fff" stroke="#808080" stroke-width="1" /><rect x="62.5" y="6.5" width="2.0" height="2.0" fill="#fff" stroke="#b2b2b2" stroke-width="1" /><text x="47.3" y="8.6" font-size="2.53" font-weight="bold" stroke="#333" stroke-width="0.2" text-anchor="start" fill="#333" transform="rotate(0.05)">Environment</text><text x="47.3" y="11.899999999999999" font-size="2.53" font-weight="bold" stroke="#333" stroke-width="0.2" text-anchor="start" fill="#333" transform="rotate(0.05)">Model</text><text x="47.3" y="15.2" font-size="2.53" font-weight="bold" stroke="#333" stroke-width="0.2" text-anchor="start" fill="#333" transform="rotate(0.05)">Composer</text><path d="M 75.5 16.5 V 82.5" fill="none" stroke="#bcbcbc" stroke-width="1" stroke-dasharray="1.5 1"/><rect x="66.5" y="5.5" width="18.0" height="10.0" fill="#fff" stroke="#808080" stroke-width="1" /><rect x="81.5" y="6.5" width="2.0" height="2.0" fill="#fff" stroke="#b2b2b2" stroke-width="1" /><text x="67.8" y="8.6" font-size="2.53" font-weight="bold" stroke="#333" stroke-width="0.2" text-anchor="start" fill="#333" transform="rotate(0.05)">Tactics</text><text x="67.8" y="11.899999999999999" font-size="2.53" font-weight="bold" stroke="#333" stroke-width="0.2" text-anchor="start" fill="#333" transform="rotate(0.05)">Calculator</text><path d="M 94.5 16.5 V 82.5" fill="none" stroke="#bcbcbc" stroke-width="1" stroke-dasharray="1.5 1"/><rect x="85.5" y="5.5" width="18.0" height="10.0" fill="#fff" stroke="#808080" stroke-width="1" /><rect x="100.5" y="6.5" width="2.0" height="2.0" fill="#fff" stroke="#b2b2b2" stroke-width="1" /><text x="86.8" y="8.6" font-size="2.53" font-weight="bold" stroke="#333" stroke-width="0.2" text-anchor="start" fill="#333" transform="rotate(0.05)">Motor</text><text x="86.8" y="11.899999999999999" font-size="2.53" font-weight="bold" stroke="#333" stroke-width="0.2" text-anchor="start" fill="#333" transform="rotate(0.05)">Controller</text><path d="M 15.5 30.5 H 55.5 M 55.5 32.5 H 94.5 M 35.5 35.5 H 94.5 M 55.5 52.5 H 94.5 M 75.5 68.5 H 122.5 M 60.5 72.5 H 108.5" fill="none" stroke="#aaaaaa" stroke-width="1"/><path d="M 15.5 23.5 H 17.5 V 25.5 H 15.5 M 35.5 25.5 H 38.5 V 27.5 H 35.5 M 55.5 43.5 H 58.5 V 46.5 H 55.5 M 75.5 59.5 H 78.5 V 62.5 H 75.5" fill="none" stroke="#aaaaaa" stroke-width="1"/><text x="6" y="21.5" font-size="2.0" stroke="#555" stroke-width="0.1" text-anchor="start" fill="#555" transform="rotate(0.05)">analyse audio signal</text><text x="38" y="24.8" font-size="2.0" stroke="#555" stroke-width="0.1" text-anchor="start" fill="#555" transform="rotate(0.05)">analyse video signal</text><text x="18" y="29.8" font-size="2.0" stroke="#555" stroke-width="0.1" text-anchor="start" fill="#555" transform="rotate(0.05)">list of detected audio sources</text><text x="57" y="31.8" font-size="2.0" stroke="#555" stroke-width="0.1" text-anchor="start" fill="#555" transform="rotate(0.05)">sky count of detected stones</text><text x="57" y="34.6" font-size="2.0" stroke="#555" stroke-width="0.1" text-anchor="start" fill="#555" transform="rotate(0.05)">list count of visual environment</text><text x="59" y="45.5" font-size="2.0" stroke="#555" stroke-width="0.1" text-anchor="start" fill="#555" transform="rotate(0.05)">create 3D world</text><text x="72" y="52" font-size="2.0" stroke="#555" stroke-width="0.1" text-anchor="start" fill="#555" transform="rotate(0.05)">3D endpoint 3Dworld</text><text x="66" y="57.5" font-size="2.0" stroke="#555" stroke-width="0.1" text-anchor="start" fill="#555" transform="rotate(0.05)">calculate action list</text><text x="90" y="68" font-size="2.0" stroke="#555" stroke-width="0.1" text-anchor="start" fill="#555" transform="rotate(0.05)">calculate list of found actions</text><text x="60" y="72" font-size="2.0" stroke="#555" stroke-width="0.1" text-anchor="start" fill="#555" transform="rotate(0.05)">update final action list for scheduler</text><path d="M 112.5 50.5 V 64.5 H 78.5" fill="none" stroke="#bbbbbb" stroke-width="1" stroke-dasharray="1 1"/><path d="M98.5 26.5H124.5L126.5 28.5V50.5H98.5z" fill="#fff" stroke="#8a8a8a" stroke-width="1"/><path d="M124.5 26.5V28.5H126.5" fill="none" stroke="#8a8a8a" stroke-width="0.3"/><text x="112" y="29.5" font-size="2.64" font-weight="bold" stroke="#111" stroke-width="0.2" text-anchor="middle" fill="#111" transform="rotate(0.05)">Parallel task</text><text x="99.5" y="32.5" font-size="2.0" stroke="#444" stroke-width="0.1" text-anchor="start" fill="#444" transform="rotate(0.05)">Any actions can</text><text x="99.5" y="34.9" font-size="2.0" stroke="#444" stroke-width="0.1" text-anchor="start" fill="#444" transform="rotate(0.05)">refresh be processed</text><text x="99.5" y="37.3" font-size="2.0" stroke="#444" stroke-width="0.1" text-anchor="start" fill="#444" transform="rotate(0.05)">or that</text><text x="99.5" y="39.7" font-size="2.0" stroke="#444" stroke-width="0.1" text-anchor="start" fill="#444" transform="rotate(0.05)">after a number action</text><text x="99.5" y="42.1" font-size="2.0" stroke="#444" stroke-width="0.1" text-anchor="start" fill="#444" transform="rotate(0.05)">the next actions are</text><text x="99.5" y="44.5" font-size="2.0" stroke="#444" stroke-width="0.1" text-anchor="start" fill="#444" transform="rotate(0.05)">immediately available</text></svg></div>
<div class="th" style="left:209px;top:252px;width:127.5px;height:84px"><svg width="128" height="84" viewBox="0 0 128 84" font-family="Liberation Sans" style="position:absolute;left:0;top:0"><path d="M0.5 3.6H29L30.6 2V0" fill="none" stroke="#888" stroke-width="0.5"/><text x="5" y="2.75" font-size="2.2" stroke="#666" stroke-width="0.1" text-anchor="start" fill="#666" transform="rotate(0.05)">Solution Strategy</text><text x="126" y="1.8" font-size="1.3" stroke="#bbb" stroke-width="0.1" text-anchor="end" fill="#bbb" transform="rotate(0.05)">1 / 1 of 1</text><path d="M8.5 14.5H53.5L55.5 16.5V55.5H8.5z" fill="#ffff40" stroke="#b5b5b5" stroke-width="1"/><path d="M53.5 14.5V16.5H55.5" fill="none" stroke="#b5b5b5" stroke-width="0.3"/><text x="31.5" y="18.1" font-size="2.76" font-weight="bold" stroke="#111" stroke-width="0.2" text-anchor="middle" fill="#111" transform="rotate(0.05)">Guiding Main Principles</text><text x="9.5" y="21.1" font-size="2.35" stroke="#333" stroke-width="0.1" text-anchor="start" fill="#333" transform="rotate(0.05)">The functions of the HoBS are divided</text><text x="9.5" y="23.700000000000003" font-size="2.35" stroke="#333" stroke-width="0.1" text-anchor="start" fill="#333" transform="rotate(0.05)">into two logic blocks:</text><text x="9.5" y="28.9" font-size="2.35" stroke="#333" stroke-width="0.1" text-anchor="start" fill="#333" transform="rotate(0.05)">The basic logic</text><text x="9.5" y="31.5" font-size="2.35" stroke="#333" stroke-width="0.1" text-anchor="start" fill="#333" transform="rotate(0.05)">gets local sensor information</text><text x="9.5" y="34.1" font-size="2.35" stroke="#333" stroke-width="0.1" text-anchor="start" fill="#333" transform="rotate(0.05)">and controls things</text><text x="9.5" y="36.7" font-size="2.35" stroke="#333" stroke-width="0.1" text-anchor="start" fill="#333" transform="rotate(0.05)">within the system boundary of the HoBS</text><text x="9.5" y="42.0" font-size="2.35" stroke="#333" stroke-width="0.1" text-anchor="start" fill="#333" transform="rotate(0.05)">The main logic</text><text x="9.5" y="44.6" font-size="2.35" stroke="#333" stroke-width="0.1" text-anchor="start" fill="#333" transform="rotate(0.05)">gets sensor data of the environment</text><text x="9.5" y="47.2" font-size="2.35" stroke="#333" stroke-width="0.1" text-anchor="start" fill="#333" transform="rotate(0.05)">and calculates movement actions</text><text x="9.5" y="49.8" font-size="2.35" stroke="#333" stroke-width="0.1" text-anchor="start" fill="#333" transform="rotate(0.05)">to effectively fulfill the mission</text><text x="9.5" y="52.4" font-size="2.35" stroke="#333" stroke-width="0.1" text-anchor="start" fill="#333" transform="rotate(0.05)">that was programmed before.</text><path d="M8.5 57.5H52.5L54.5 59.5V80.5H8.5z" fill="#fff" stroke="#b5b5b5" stroke-width="1"/><path d="M52.5 57.5V59.5H54.5" fill="none" stroke="#b5b5b5" stroke-width="0.3"/><text x="31" y="60.2" font-size="2.76" font-weight="bold" stroke="#111" stroke-width="0.2" text-anchor="middle" fill="#111" transform="rotate(0.05)">Outer World</text><text x="9.5" y="63.0" font-size="2.35" stroke="#444" stroke-width="0.1" text-anchor="start" fill="#444" transform="rotate(0.05)">The main logic</text><text x="9.5" y="65.6" font-size="2.35" stroke="#444" stroke-width="0.1" text-anchor="start" fill="#444" transform="rotate(0.05)">addresses the following topics:</text><text x="9.5" y="68.2" font-size="2.35" stroke="#444" stroke-width="0.1" text-anchor="start" fill="#444" transform="rotate(0.05)">- calculating movement actions</text><text x="9.5" y="70.8" font-size="2.35" stroke="#444" stroke-width="0.1" text-anchor="start" fill="#444" transform="rotate(0.05)">- to be performed by basic logic (tactics)</text><text x="9.5" y="73.4" font-size="2.35" stroke="#444" stroke-width="0.1" text-anchor="start" fill="#444" transform="rotate(0.05)">- evaluating sensor signals</text><text x="9.5" y="76.0" font-size="2.35" stroke="#444" stroke-width="0.1" text-anchor="start" fill="#444" transform="rotate(0.05)">- how environment and camera</text><path d="M77.5 7.5H111.5L113.5 9.5V30.5H77.5z" fill="#fff" stroke="#b5b5b5" stroke-width="1"/><path d="M111.5 7.5V9.5H113.5" fill="none" stroke="#b5b5b5" stroke-width="0.3"/><text x="95" y="10.8" font-size="2.76" font-weight="bold" stroke="#111" stroke-width="0.2" text-anchor="middle" fill="#111" transform="rotate(0.05)">Inner World</text><text x="78.5" y="13.8" font-size="2.35" stroke="#444" stroke-width="0.1" text-anchor="start" fill="#444" transform="rotate(0.05)">The basic logic</text><text x="78.5" y="16.400000000000002" font-size="2.35" stroke="#444" stroke-width="0.1" text-anchor="start" fill="#444" transform="rotate(0.05)">addresses the following topics:</text><text x="78.5" y="19.0" font-size="2.35" stroke="#444" stroke-width="0.1" text-anchor="start" fill="#444" transform="rotate(0.05)">- charging</text><text x="78.5" y="21.6" font-size="2.35" stroke="#444" stroke-width="0.1" text-anchor="start" fill="#444" transform="rotate(0.05)">- programming</text><text x="78.5" y="24.200000000000003" font-size="2.35" stroke="#444" stroke-width="0.1" text-anchor="start" fill="#444" transform="rotate(0.05)">- requiring the limits</text><text x="78.5" y="26.8" font-size="2.35" stroke="#444" stroke-width="0.1" text-anchor="start" fill="#444" transform="rotate(0.05)">- and more</text><path d="M 113.5 19.5 H 119.5 V 69.5 H 116.5" fill="none" stroke="#bbbbbb" stroke-width="1" stroke-dasharray="1 1"/><path d="M 54.5 68.5 H 60.5 V 52.5 H 66.5" fill="none" stroke="#bbbbbb" stroke-width="1" stroke-dasharray="1 1"/><rect x="62.5" y="38.5" width="58.0" height="38.0" fill="none" stroke="#959595" stroke-width="1" /><text x="91.5" y="42.8" font-size="2.76" font-weight="bold" stroke="#111" stroke-width="0.2" text-anchor="middle" fill="#111" transform="rotate(0.05)">Electrical Parts and Electronics</text><text x="91.5" y="38.2" font-size="1.4" stroke="#777" stroke-width="0.1" text-anchor="middle" fill="#777" transform="rotate(0.05)">part</text><text x="69" y="47.5" font-size="1.6" stroke="#555" stroke-width="0.1" text-anchor="start" fill="#555" transform="rotate(0.05)">Ext.drive USB</text><text x="69" y="56.8" font-size="1.6" stroke="#555" stroke-width="0.1" text-anchor="start" fill="#555" transform="rotate(0.05)">Ext.connected CPU</text><text x="92" y="51.5" font-size="1.6" stroke="#555" stroke-width="0.1" text-anchor="start" fill="#555" transform="rotate(0.05)">Motor Board Connector</text><rect x="66.5" y="49.5" width="24.0" height="5.0" fill="#fff" stroke="#808080" stroke-width="1" rx="1"/><text x="67.5" y="53" font-size="2.64" font-weight="bold" stroke="#111" stroke-width="0.2" text-anchor="start" fill="#111" transform="rotate(0.05)">Mainlogic Board</text><rect x="93.5" y="65.5" width="23.0" height="7.0" fill="#fff" stroke="#808080" stroke-width="1" /><text x="95" y="69.5" font-size="2.64" font-weight="bold" stroke="#111" stroke-width="0.2" text-anchor="start" fill="#111" transform="rotate(0.05)">Baselogic Board</text></svg></div>
<div class="th" style="left:347px;top:252px;width:127.7px;height:83.8px"><svg width="128" height="84" viewBox="0 0 128 84" font-family="Liberation Sans" style="position:absolute;left:0;top:0"><path d="M0.5 3.6H39L40.6 2V0" fill="none" stroke="#888" stroke-width="0.5"/><text x="5" y="2.75" font-size="2.2" stroke="#666" stroke-width="0.1" text-anchor="start" fill="#666" transform="rotate(0.05)">Risks and Technical Debts</text><text x="126" y="1.8" font-size="1.3" stroke="#bbb" stroke-width="0.1" text-anchor="end" fill="#bbb" transform="rotate(0.05)">1 / 1 of 1</text><path d="M 31.5 37.5 V 22.5 H 41.5" fill="none" stroke="#aaaaaa" stroke-width="1" stroke-dasharray="1 1"/><path d="M 44.5 44.5 H 58.5 V 64.5 H 70.5" fill="none" stroke="#dddddd" stroke-width="1" stroke-dasharray="1 1"/><path d="M41.5 10.5H84.5L86.5 12.5V36.5H41.5z" fill="#fff" stroke="#808080" stroke-width="1"/><path d="M84.5 10.5V12.5H86.5" fill="none" stroke="#808080" stroke-width="0.3"/><text x="43" y="13" font-size="2.53" font-weight="bold" stroke="#111" stroke-width="0.2" text-anchor="start" fill="#111" transform="rotate(0.05)">Fault Detection Strategy: step fail</text><text x="43" y="16.0" font-size="2.35" stroke="#333" stroke-width="0.1" text-anchor="start" fill="#333" transform="rotate(0.05)">The fault detection strategy for</text><text x="43" y="18.6" font-size="2.35" stroke="#333" stroke-width="0.1" text-anchor="start" fill="#333" transform="rotate(0.05)">logic and data on the Main Logic Board</text><text x="43" y="21.2" font-size="2.35" stroke="#333" stroke-width="0.1" text-anchor="start" fill="#333" transform="rotate(0.05)">allows for simulated faults.</text><text x="43" y="25.5" font-size="2.35" stroke="#333" stroke-width="0.1" text-anchor="start" fill="#333" transform="rotate(0.05)">But every error in logic can be detected</text><text x="43" y="28.1" font-size="2.35" stroke="#333" stroke-width="0.1" text-anchor="start" fill="#333" transform="rotate(0.05)">by checking one stop.</text><rect x="20.5" y="37.5" width="24.0" height="14.0" fill="#fff" stroke="#7e7e7e" stroke-width="1" /><text x="24" y="40.8" font-size="2.64" font-weight="bold" stroke="#333" stroke-width="0.2" text-anchor="start" fill="#333" transform="rotate(0.05)">Risk: Wrong</text><text x="24" y="44.099999999999994" font-size="2.64" font-weight="bold" stroke="#333" stroke-width="0.2" text-anchor="start" fill="#333" transform="rotate(0.05)">tactic is</text><text x="24" y="47.4" font-size="2.64" font-weight="bold" stroke="#333" stroke-width="0.2" text-anchor="start" fill="#333" transform="rotate(0.05)">calculated</text><path d="M70.5 48.5H118.5L120.5 50.5V79.5H70.5z" fill="#fff" stroke="#e6e6e6" stroke-width="1"/><path d="M118.5 48.5V50.5H120.5" fill="none" stroke="#e6e6e6" stroke-width="0.3"/><text x="95.5" y="52" font-size="2.3" stroke="#bbb" stroke-width="0.1" text-anchor="middle" fill="#bbb" transform="rotate(0.05)">Fault Detection (simple logic)</text><text x="72" y="55.0" font-size="2.35" stroke="#c8c8c8" stroke-width="0.1" text-anchor="start" fill="#c8c8c8" transform="rotate(0.05)">Logic and data is supervised</text><text x="72" y="57.6" font-size="2.35" stroke="#c8c8c8" stroke-width="0.1" text-anchor="start" fill="#c8c8c8" transform="rotate(0.05)">by the SB Watchdog</text><text x="72" y="60.2" font-size="2.35" stroke="#c8c8c8" stroke-width="0.1" text-anchor="start" fill="#c8c8c8" transform="rotate(0.05)">as well as the Main Board Controller</text><text x="72" y="62.8" font-size="2.35" stroke="#c8c8c8" stroke-width="0.1" text-anchor="start" fill="#c8c8c8" transform="rotate(0.05)"></text><text x="72" y="65.4" font-size="2.35" stroke="#c8c8c8" stroke-width="0.1" text-anchor="start" fill="#c8c8c8" transform="rotate(0.05)">Every software component</text><text x="72" y="68.0" font-size="2.35" stroke="#c8c8c8" stroke-width="0.1" text-anchor="start" fill="#c8c8c8" transform="rotate(0.05)">on the Main Logic Board</text><text x="72" y="70.6" font-size="2.35" stroke="#c8c8c8" stroke-width="0.1" text-anchor="start" fill="#c8c8c8" transform="rotate(0.05)">sends event periodical data</text><text x="72" y="73.2" font-size="2.35" stroke="#c8c8c8" stroke-width="0.1" text-anchor="start" fill="#c8c8c8" transform="rotate(0.05)">and input to feed to the SB Watchdog</text><text x="72" y="75.8" font-size="2.35" stroke="#c8c8c8" stroke-width="0.1" text-anchor="start" fill="#c8c8c8" transform="rotate(0.05)">as well as prevent the behavior in the case</text></svg></div>
</body></html>
